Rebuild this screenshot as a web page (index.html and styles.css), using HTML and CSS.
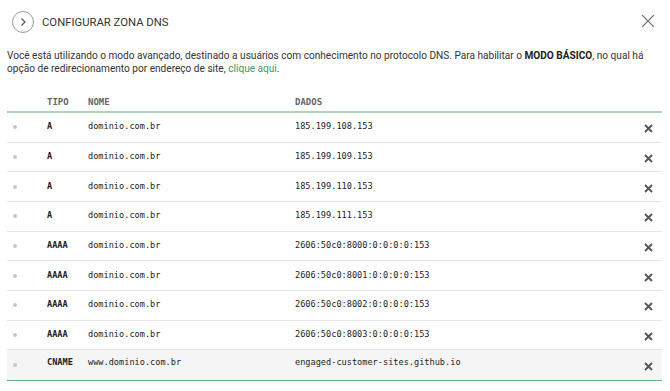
FILE: index.html
```html
<!DOCTYPE html>
<html lang="pt-BR">
<head>
<meta charset="utf-8">
<title>Configurar Zona DNS</title>
<link rel="stylesheet" href="styles.css">
</head>
<body>
<div class="panel">
  <header class="top">
    <div class="title-wrap">
      <span class="circle-btn">
        <svg width="22" height="22" viewBox="0 0 22 22"><circle cx="11" cy="11" r="10.5" fill="none" stroke="#9a9a9a" stroke-width="1"/><path d="M9.5 7.5 L13 11 L9.5 14.5" fill="none" stroke="#555" stroke-width="1.2"/></svg>
      </span>
      <h1 class="title">CONFIGURAR ZONA DNS</h1>
    </div>
    <span class="close">
      <svg width="14" height="14" viewBox="0 0 14 14"><path d="M1 1 L13 13 M13 1 L1 13" stroke="#777" stroke-width="1.1" fill="none"/></svg>
    </span>
  </header>
  <p class="intro">Você está utilizando o modo avançado, destinado a usuários com conhecimento no protocolo DNS. Para habilitar o <b>MODO BÁSICO</b>, no qual há opção de redirecionamento por endereço de site, <a href="#" class="link">clique aqui</a>.</p>

  <div class="table">
    <div class="row head">
      <span class="c-dot"></span>
      <span class="c-type">TIPO</span>
      <span class="c-name">NOME</span>
      <span class="c-data">DADOS</span>
      <span class="c-del"></span>
    </div>
    <div class="row"><span class="c-dot"><i class="dot"></i></span><span class="c-type">A</span><span class="c-name">dominio.com.br</span><span class="c-data">185.199.108.153</span><span class="c-del"><svg width="9" height="9" viewBox="0 0 9 9"><path d="M1 1 L8 8 M8 1 L1 8" stroke="#555" stroke-width="1.8"/></svg></span></div>
    <div class="row"><span class="c-dot"><i class="dot"></i></span><span class="c-type">A</span><span class="c-name">dominio.com.br</span><span class="c-data">185.199.109.153</span><span class="c-del"><svg width="9" height="9" viewBox="0 0 9 9"><path d="M1 1 L8 8 M8 1 L1 8" stroke="#555" stroke-width="1.8"/></svg></span></div>
    <div class="row"><span class="c-dot"><i class="dot"></i></span><span class="c-type">A</span><span class="c-name">dominio.com.br</span><span class="c-data">185.199.110.153</span><span class="c-del"><svg width="9" height="9" viewBox="0 0 9 9"><path d="M1 1 L8 8 M8 1 L1 8" stroke="#555" stroke-width="1.8"/></svg></span></div>
    <div class="row"><span class="c-dot"><i class="dot"></i></span><span class="c-type">A</span><span class="c-name">dominio.com.br</span><span class="c-data">185.199.111.153</span><span class="c-del"><svg width="9" height="9" viewBox="0 0 9 9"><path d="M1 1 L8 8 M8 1 L1 8" stroke="#555" stroke-width="1.8"/></svg></span></div>
    <div class="row"><span class="c-dot"><i class="dot"></i></span><span class="c-type">AAAA</span><span class="c-name">dominio.com.br</span><span class="c-data">2606:50c0:8000:0:0:0:0:153</span><span class="c-del"><svg width="9" height="9" viewBox="0 0 9 9"><path d="M1 1 L8 8 M8 1 L1 8" stroke="#555" stroke-width="1.8"/></svg></span></div>
    <div class="row"><span class="c-dot"><i class="dot"></i></span><span class="c-type">AAAA</span><span class="c-name">dominio.com.br</span><span class="c-data">2606:50c0:8001:0:0:0:0:153</span><span class="c-del"><svg width="9" height="9" viewBox="0 0 9 9"><path d="M1 1 L8 8 M8 1 L1 8" stroke="#555" stroke-width="1.8"/></svg></span></div>
    <div class="row"><span class="c-dot"><i class="dot"></i></span><span class="c-type">AAAA</span><span class="c-name">dominio.com.br</span><span class="c-data">2606:50c0:8002:0:0:0:0:153</span><span class="c-del"><svg width="9" height="9" viewBox="0 0 9 9"><path d="M1 1 L8 8 M8 1 L1 8" stroke="#555" stroke-width="1.8"/></svg></span></div>
    <div class="row"><span class="c-dot"><i class="dot"></i></span><span class="c-type">AAAA</span><span class="c-name">dominio.com.br</span><span class="c-data">2606:50c0:8003:0:0:0:0:153</span><span class="c-del"><svg width="9" height="9" viewBox="0 0 9 9"><path d="M1 1 L8 8 M8 1 L1 8" stroke="#555" stroke-width="1.8"/></svg></span></div>
    <div class="row last"><span class="c-dot"><i class="dot"></i></span><span class="c-type">CNAME</span><span class="c-name">www.dominio.com.br</span><span class="c-data">engaged-customer-sites.github.io</span><span class="c-del"><svg width="9" height="9" viewBox="0 0 9 9"><path d="M1 1 L8 8 M8 1 L1 8" stroke="#555" stroke-width="1.8"/></svg></span></div>
  </div>
</div>
</body>
</html>
```

FILE: styles.css
```css
html, body {
  margin: 0;
  padding: 0;
  background: #fff;
}
body {
  font-family: Roboto, "Liberation Sans", sans-serif;
  color: #333;
}
.panel {
  padding: 0 8px 0 7px;
}
.top {
  height: 44px;
  display: flex;
  align-items: center;
  justify-content: space-between;
}
.title-wrap {
  display: flex;
  align-items: center;
  gap: 8px;
  padding-left: 5px;
}
.circle-btn {
  display: flex;
  width: 22px;
  height: 22px;
}
.title {
  margin: 0;
  font-size: 11.3px;
  font-weight: 400;
  color: #333;
}
.close {
  display: flex;
  margin-right: 7px;
  margin-top: -2px;
}
.intro {
  margin: 5px 0 0;
  font-size: 10.1px;
  line-height: 13px;
  color: #333;
}
.intro b {
  font-weight: 700;
  color: #222;
}
.link {
  color: #3d9a5a;
  text-decoration: none;
}
.table {
  margin-top: 14px;
  border-bottom: 1.5px solid #5fb77f;
}
.row {
  display: flex;
  align-items: center;
  height: 28.67px;
  border-bottom: 1px solid #e6e6e6;
  font-family: "DejaVu Sans Mono", "Liberation Mono", monospace;
  font-size: 8.6px;
  color: #222;
}
.row .c-type,
.row .c-name,
.row .c-data {
  margin-bottom: 2px;
}
.row.head {
  height: 24px;
  box-sizing: border-box;
  border-bottom: 2px solid #a6d8b5;
  font-weight: 700;
  color: #666;
  font-size: 9px;
  align-items: flex-start;
  padding-top: 8px;
}
.row.head .c-type,
.row.head .c-name,
.row.head .c-data {
  margin-bottom: 0;
}
.row.last {
  background: #f5f5f5;
  border-bottom: 0;
  height: 30px;
}
.row.last .c-type,
.row.last .c-name,
.row.last .c-data {
  margin-bottom: 7px;
}
.c-dot {
  width: 40px;
  display: flex;
  padding-left: 6px;
  box-sizing: border-box;
}
.dot {
  width: 4px;
  height: 4px;
  border-radius: 50%;
  background: #c8c8c8;
}
.c-type {
  width: 41px;
  font-weight: 700;
}
.c-name {
  width: 207px;
}
.c-data {
  flex: 1;
}
.c-del {
  width: 18px;
  display: flex;
  padding-top: 3px;
}
```
